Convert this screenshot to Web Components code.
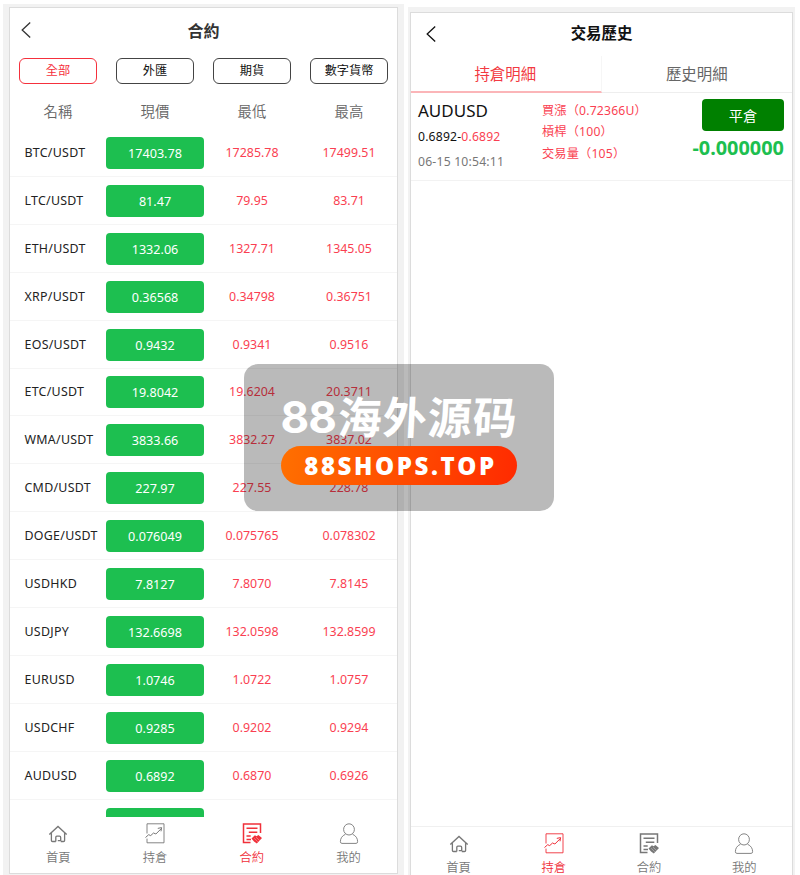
<!DOCTYPE html>
<html lang="zh-Hant">
<head>
<meta charset="UTF-8">
<title>合約</title>
<style>
    * { box-sizing: border-box; }
    body {
        margin: 0;
        width: 800px;
        height: 875px;
        overflow: hidden;
        position: relative;
        display: flex;
        align-items: flex-start;
        gap: 4px;
        padding-left: 3px;
        background: #fff;
        font-family: "Noto Sans", "Noto Sans CJK TC", sans-serif;
        color: #222;
    }
    phone-frame.contract { --w: 401px; --h: 871px; --top: 4px; --pad: 3px 6px 1px 6px; --title: #333; --head: 46px; --title-size: 16px; --back: 11px; }
    phone-frame.history { --w: 387px; --h: 881px; --top: 7px; --pad: 5px 2px 0 2px; --title: #111; --head: 43px; --title-size: 15.4px; --back: 15px; }
</style>
</head>
<body>
<phone-frame class="contract" heading="合約">
    <market-list></market-list>
    <tab-bar slot="footer" active="2"></tab-bar>
</phone-frame>
<phone-frame class="history" heading="交易歷史">
    <detail-tabs></detail-tabs>
    <position-card></position-card>
    <tab-bar slot="footer" class="lined" active="1"></tab-bar>
</phone-frame>
<shop-badge></shop-badge>

<script>
class PhoneFrame extends HTMLElement {
    constructor() {
        super();
        this.attachShadow({ mode: 'open' });
    }

    connectedCallback() {
        this.shadowRoot.innerHTML = `
            <style>
                * { box-sizing: border-box; }
                :host {
                    display: block;
                    box-sizing: border-box;
                    flex: none;
                    width: var(--w);
                    height: var(--h);
                    margin-top: var(--top);
                    padding: var(--pad);
                    background: #f2f2f2;
                }
                .screen {
                    height: 100%;
                    display: flex;
                    flex-direction: column;
                    background: #fff;
                    border: 1px solid #dcdcdc;
                }
                header {
                    flex: none;
                    height: var(--head);
                    display: grid;
                    grid-template-columns: 30px 1fr 30px;
                    align-items: center;
                    color: var(--title);
                }
                header svg { margin-left: var(--back); margin-bottom: 2px; display: block; }
                h1 { margin: 0; padding-bottom: 1px; text-align: center; font-size: var(--title-size); font-weight: 700; line-height: 24px; }
                main { flex: 1; min-height: 0; overflow: hidden; }
            </style>
            <div class="screen">
                <header>
                    <svg width="10" height="18" viewBox="0 0 10 18" fill="none" stroke="currentColor" stroke-width="1.3"><path d="M9.2 1.5 1.2 9l8 7.5"/></svg>
                    <h1>${this.getAttribute('heading')}</h1>
                </header>
                <main><slot></slot></main>
                <slot name="footer"></slot>
            </div>
        `;
    }
}

class MarketList extends HTMLElement {
    constructor() {
        super();
        this.attachShadow({ mode: 'open' });
        this.filters = ['全部', '外匯', '期貨', '數字貨幣'];
        this.columns = ['名稱', '現價', '最低', '最高'];
        this.rows = [
            ['BTC/USDT', '17403.78', '17285.78', '17499.51'],
            ['LTC/USDT', '81.47', '79.95', '83.71'],
            ['ETH/USDT', '1332.06', '1327.71', '1345.05'],
            ['XRP/USDT', '0.36568', '0.34798', '0.36751'],
            ['EOS/USDT', '0.9432', '0.9341', '0.9516'],
            ['ETC/USDT', '19.8042', '19.6204', '20.3711'],
            ['WMA/USDT', '3833.66', '3832.27', '3837.02'],
            ['CMD/USDT', '227.97', '227.55', '228.78'],
            ['DOGE/USDT', '0.076049', '0.075765', '0.078302'],
            ['USDHKD', '7.8127', '7.8070', '7.8145'],
            ['USDJPY', '132.6698', '132.0598', '132.8599'],
            ['EURUSD', '1.0746', '1.0722', '1.0757'],
            ['USDCHF', '0.9285', '0.9202', '0.9294'],
            ['AUDUSD', '0.6892', '0.6870', '0.6926'],
            ['', '', '', '']
        ];
    }

    connectedCallback() {
        this.shadowRoot.innerHTML = `
            <style>
                * { box-sizing: border-box; }
                :host { display: block; margin-left: -0.5px; }
                .grid { display: grid; grid-template-columns: repeat(4, 97px); align-items: center; justify-items: center; }
                .filters { height: 33px; }
                .filters span {
                    width: 78.5px;
                    height: 26px;
                    border: 1px solid #444;
                    border-radius: 6px;
                    font-size: 12.2px;
                    line-height: 24px;
                    text-align: center;
                    color: #111;
                }
                .filters .on { color: #f5303c; border-color: #f5303c; }
                .head { height: 42px; padding-top: 4px; font-size: 14.4px; color: #666; font-family: "Noto Sans CJK TC", sans-serif; font-weight: 350; }
                .row { height: 47.92px; border-bottom: 1px solid #f5f5f5; font-size: 12.4px; color: #fa3f52; }
                .name { justify-self: start; padding-left: 15px; color: #222; letter-spacing: 0.28px; white-space: nowrap; }
                .price {
                    width: 97.5px;
                    height: 32px;
                    margin-top: 1px;
                    border-radius: 4px;
                    background: #1dbf50;
                    color: #fff;
                    font-size: 12.6px;
                    line-height: 33px;
                    text-align: center;
                }
            </style>
            <div class="grid filters">
                ${this.filters.map((f, i) => `<span class="${i === 0 ? 'on' : ''}">${f}</span>`).join('')}
            </div>
            <div class="grid head">${this.columns.map(c => `<span>${c}</span>`).join('')}</div>
            ${this.rows.map(r => `
                <div class="grid row">
                    <span class="name">${r[0]}</span>
                    <span class="price">${r[1]}</span>
                    <span>${r[2]}</span>
                    <span>${r[3]}</span>
                </div>`).join('')}
        `;
    }
}

class DetailTabs extends HTMLElement {
    constructor() {
        super();
        this.attachShadow({ mode: 'open' });
        this.shadowRoot.innerHTML = `
            <style>
                * { box-sizing: border-box; }
                :host { display: grid; grid-template: 37px / 1fr 1fr; height: 37px; font-size: 15.4px; }
                span {
                    height: 37px;
                    text-align: center;
                    line-height: 37px;
                    color: #666;
                    border-bottom: 1px solid #eee;
                }
                .on { color: #f23a42; border-bottom: 2px solid #fbb5b8; border-right: 1px solid #f6f6f6; padding-right: 1px; }
            </style>
            <span class="on">持倉明細</span><span>歷史明細</span>
        `;
    }
}

class PositionCard extends HTMLElement {
    constructor() {
        super();
        this.attachShadow({ mode: 'open' });
        this.shadowRoot.innerHTML = `
            <style>
                * { box-sizing: border-box; }
                :host {
                    display: grid;
                    box-sizing: border-box;
                    grid-template-columns: 124px 1fr auto;
                    height: 88px;
                    padding: 6px 8px 0 7px;
                    border-bottom: 1px solid #f2f2f2;
                    font-size: 12.2px;
                }
                .left div, .mid div { white-space: nowrap; }
                .symbol { font-size: 17px; line-height: 24px; color: #111; }
                .range { line-height: 25px; padding-top: 1px; color: #111; letter-spacing: 0.18px; }
                .range b { font-weight: 400; color: #fa3f52; }
                .time { line-height: 25px; color: #777; letter-spacing: 0.2px; }
                .mid { color: #fa3f52; line-height: 21.4px; padding-top: 1px; letter-spacing: 0.18px; }
                .right { display: flex; flex-direction: column; align-items: flex-end; }
                .close {
                    width: 82px;
                    height: 32px;
                    border-radius: 4px;
                    background: #008000;
                    color: #fff;
                    font-size: 14.2px;
                    line-height: 33px;
                    text-align: center;
                }
                .profit { font-size: 19.9px; font-weight: 700; line-height: 34px; color: #1dbf50; }
            </style>
            <div class="left">
                <div class="symbol">AUDUSD</div>
                <div class="range">0.6892-<b>0.6892</b></div>
                <div class="time">06-15 10:54:11</div>
            </div>
            <div class="mid">
                <div>買漲（0.72366U）</div>
                <div>槓桿（100）</div>
                <div>交易量（105）</div>
            </div>
            <div class="right">
                <div class="close">平倉</div>
                <div class="profit">-0.000000</div>
            </div>
        `;
    }
}

class TabBar extends HTMLElement {
    constructor() {
        super();
        this.attachShadow({ mode: 'open' });
        this.items = [
            ['首頁', '<path stroke-width="1.3" d="M1.3 11.6 10 3.5l8.7 8.1M3.4 10.2v7.2q0 1.1 1.1 1.1h3.3M16.6 10.2v7.2q0 1.1-1.1 1.1h-2.7M7.8 18.5v-4.3q0-1 1-1h2.7q1.2 0 1.2 1.2v3.2H9.8"/>'],
            ['持倉', '<path stroke-width=".9" d="M2 10.5V.8h17v19H2v-4.2"/><path stroke-width="1" d="m.5 14.5 3.2-2.8 2 .9 2.8-2.6 2.4 1 5.4-5.4M12.8 5.4l3.8-.8-.6 3.7"/>'],
            ['合約', '<path stroke-width="1.5" d="M18.5 10V1H1.5v18.5h7M4.5 5.2h11M6.8 9.2h8.5M4.5 13h4.2M4.5 16.5h4.5"/><path fill="currentColor" stroke="none" d="m9.5 15.5 3.4-3.3 1.7 1 1.8-1.3 3.6 3.2-1.4 1.5-3.8 4-2.8-2Z"/><path stroke="#fff" stroke-width=".35" d="m12.2 15.3 3.6 3.5M14 14.2l3.5 3.2"/>'],
            ['我的', '<path stroke-width=".9" d="M10 .8a5.2 5.4 0 0 1 0 11.2A5.2 5.4 0 0 1 10 .8ZM6.5 11.2C3 12.8 1.4 15.5 1.4 18.5q0 1.9 1.5 1.9h14.2q1.5 0 1.5-1.9c0-3-1.6-5.7-5.1-7.3"/>']
        ];
    }

    connectedCallback() {
        const active = Number(this.getAttribute('active'));
        this.shadowRoot.innerHTML = `
            <style>
                * { box-sizing: border-box; }
                :host {
                    flex: none;
                    display: grid;
                    box-sizing: border-box;
                    grid-template-columns: repeat(4, 1fr);
                    height: 56px;
                    padding-top: 6px;
                    background: #fff;
                    font-family: "Noto Sans CJK TC", sans-serif;
                    font-size: 12.3px;
                    font-weight: 350;
                    color: #777;
                }
                :host(.lined) { height: 61px; border-top: 1px solid #f0f0f0; }
                .item { display: flex; flex-direction: column; align-items: center; line-height: 16px; }
                .item svg { display: block; width: 20px; height: 21px; margin-bottom: 5px; fill: none; stroke: currentColor; stroke-width: 1; }
                .on { color: #f0303a; }
            </style>
            ${this.items.map(([label, icon], i) => `
                <div class="item ${i === active ? 'on' : ''}">
                    <svg viewBox="0 0 20 21">${icon}</svg>
                    <span>${label}</span>
                </div>`).join('')}
        `;
    }
}

class ShopBadge extends HTMLElement {
    constructor() {
        super();
        this.attachShadow({ mode: 'open' });
        this.shadowRoot.innerHTML = `
            <style>
                * { box-sizing: border-box; }
                /* floats over both screens */
                :host {
                    position: absolute;
                    left: 244px;
                    top: 364px;
                    width: 310px;
                    height: 147px;
                    box-sizing: border-box;
                    display: flex;
                    flex-direction: column;
                    align-items: center;
                    padding-top: 24px;
                    border-radius: 14px;
                    background: rgba(0, 0, 0, 0.27);
                    color: #fff;
                }
                .name {
                    display: flex;
                    align-items: center;
                    height: 58px;
                    white-space: nowrap;
                }
                .num { width: 57px; font: 700 44px/58px Inter, sans-serif; letter-spacing: -1px; }
                .zh {
                    font: 700 44px/54px "Noto Sans CJK SC", sans-serif;
                    letter-spacing: 1px;
                    height: 58px;
                    transform: skewX(-3deg);
                }
                .pill {
                    width: 236px;
                    height: 39px;
                    border-radius: 20px;
                    background: linear-gradient(100deg, #ff7000, #ff2a00);
                    font: 800 24px/39px "Open Sans", sans-serif;
                    letter-spacing: 2.6px;
                    text-align: center;
                    padding-left: 3px;
                    white-space: nowrap;
                }
            </style>
            <div class="name"><span class="num">88</span><span class="zh" lang="zh-Hans">海外源码</span></div>
            <div class="pill">88SHOPS.TOP</div>
        `;
    }
}

customElements.define('phone-frame', PhoneFrame);
customElements.define('market-list', MarketList);
customElements.define('detail-tabs', DetailTabs);
customElements.define('position-card', PositionCard);
customElements.define('tab-bar', TabBar);
customElements.define('shop-badge', ShopBadge);
</script>
</body>
</html>
